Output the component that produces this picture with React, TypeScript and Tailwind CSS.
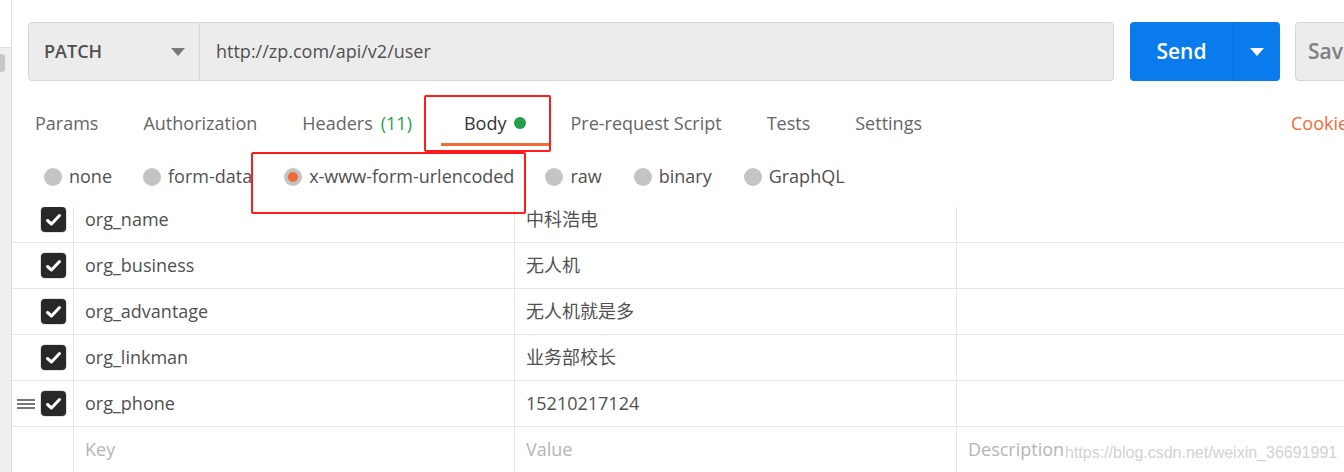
import React from "react";

const font = { fontFamily: '"Open Sans", "Noto Sans CJK SC", sans-serif' };

function Caret({ color }: { color: string }) {
  return (
    <svg width="14" height="8" viewBox="0 0 14 8">
      <polygon points="0,0 14,0 7,8" fill={color} />
    </svg>
  );
}

function Checkbox() {
  return (
    <div className="w-[25px] h-[25px] rounded-[4px] bg-[#282828] ring-1 ring-[#e2e2e2] flex items-center justify-center">
      <svg width="17" height="14" viewBox="0 0 17 14">
        <polyline points="2.5,7.5 6.5,11 14.5,2.5" fill="none" stroke="#ffffff" strokeWidth="3" strokeLinecap="round" strokeLinejoin="round" />
      </svg>
    </div>
  );
}

function Radio({ selected }: { selected?: boolean }) {
  return (
    <div className="w-[18px] h-[18px] rounded-full bg-[#c4c4c4] flex items-center justify-center shrink-0">
      {selected && <div className="w-[10px] h-[10px] rounded-full bg-[#f06a35]" />}
    </div>
  );
}

const rows = [
  { k: "org_name", v: "中科浩电" },
  { k: "org_business", v: "无人机" },
  { k: "org_advantage", v: "无人机就是多" },
  { k: "org_linkman", v: "业务部校长" },
  { k: "org_phone", v: "15210217124", handle: true },
];

export default function App() {
  return (
    <div className="w-[1344px] h-[472px] bg-white relative overflow-hidden flex" style={font}>
      {/* left strip */}
      <div className="w-[12px] shrink-0 border-r border-[#dedede] flex flex-col">
        <div className="h-[48px] border-b border-[#dedede] bg-white" />
        <div className="flex-1 bg-[#efefef] relative">
          <div className="absolute left-0 top-[6px] w-[5px] h-[18px] rounded-r-[3px] bg-[#c6c6c6]" />
        </div>
      </div>

      {/* main */}
      <div className="flex-1 flex flex-col min-w-0">
        {/* top bar */}
        <div className="flex pt-[22px] pl-[16px] shrink-0">
          <div className="flex h-[59px] w-[1086px] shrink-0 bg-[#ececec] border border-[#d6d6d6] rounded-[4px]">
            <div className="w-[171px] shrink-0 flex items-center justify-between pl-[15px] pr-[14px] border-r border-[#d6d6d6]">
              <span className="text-[18px] font-semibold text-[#505050]">PATCH</span>
              <Caret color="#7a7a7a" />
            </div>
            <div className="flex items-center pl-[16px] text-[18px] text-[#505050]">http://zp.com/api/v2/user</div>
          </div>
          <div className="ml-[16px] flex h-[59px] w-[150px] shrink-0 bg-[#097bed] rounded-[4px]">
            <div className="w-[104px] flex items-center justify-center border-r border-[#0a6bd0] text-white text-[21px] font-semibold">Send</div>
            <div className="flex-1 flex items-center justify-center">
              <Caret color="#ffffff" />
            </div>
          </div>
          <div className="ml-[15px] flex h-[59px] w-[110px] shrink-0 bg-[#ececec] border border-[#d6d6d6] rounded-[4px] items-center pl-[12px] text-[21px] font-semibold text-[#808080]">Save</div>
        </div>

        {/* tabs */}
        <div className="flex mt-[19px] h-[46px] shrink-0 text-[18px] text-[#666666]">
          <div className="px-[23px] pt-[3px] border-b-[3px] border-transparent flex items-center">Params</div>
          <div className="px-[22px] pt-[3px] border-b-[3px] border-transparent flex items-center">Authorization</div>
          <div className="px-[23px] pt-[3px] border-b-[3px] border-transparent flex items-center">
            Headers<span className="ml-[8px] text-[#2b9f4f]">(11)</span>
          </div>
          <div className="ml-[6px] px-[23px] pt-[3px] border-b-[3px] border-[#f26b3a] flex items-center text-[#333333]">
            Body<span className="ml-[8px] w-[12px] h-[12px] rounded-full bg-[#249d4d]" />
          </div>
          <div className="pl-[21px] pr-[22px] pt-[3px] border-b-[3px] border-transparent flex items-center">Pre-request Script</div>
          <div className="px-[23px] pt-[3px] border-b-[3px] border-transparent flex items-center">Tests</div>
          <div className="px-[22px] pt-[3px] border-b-[3px] border-transparent flex items-center">Settings</div>
          <div className="flex-1" />
          <div className="pt-[3px] border-b-[3px] border-transparent flex items-center text-[#f26b3a] w-[53px] overflow-hidden whitespace-nowrap">Cookies</div>
        </div>

        {/* radio row */}
        <div className="flex items-center h-[61px] pl-[32px] shrink-0 text-[18px] text-[#505050]">
          <div className="flex items-center gap-[7px]"><Radio /><span>none</span></div>
          <div className="flex items-center gap-[7px] ml-[31px]"><Radio /><span>form-data</span></div>
          <div className="flex items-center gap-[7px] ml-[32px]"><Radio selected /><span>x-www-form-urlencoded</span></div>
          <div className="flex items-center gap-[7px] ml-[31px]"><Radio /><span>raw</span></div>
          <div className="flex items-center gap-[7px] ml-[32px]"><Radio /><span>binary</span></div>
          <div className="flex items-center gap-[7px] ml-[32px]"><Radio /><span>GraphQL</span></div>
        </div>

        {/* table */}
        <div className="flex-1 overflow-hidden">
          <div className="-mt-[10px] text-[18px] text-[#505050]">
            {rows.map((r) => (
              <div key={r.k} className="flex h-[46px] border-b border-[#e6e6e6]">
                <div className="w-[62px] shrink-0 border-r border-[#e6e6e6] flex items-center justify-end pr-[7px] gap-[6px]">
                  {r.handle && (
                    <div className="flex flex-col gap-[2px]">
                      <div className="w-[18px] h-[2px] bg-[#777777]" />
                      <div className="w-[18px] h-[2px] bg-[#777777]" />
                      <div className="w-[18px] h-[2px] bg-[#777777]" />
                    </div>
                  )}
                  <Checkbox />
                </div>
                <div className="w-[441px] shrink-0 border-r border-[#e6e6e6] flex items-center pl-[11px]">{r.k}</div>
                <div className="w-[442px] shrink-0 border-r border-[#e6e6e6] flex items-center pl-[11px]">{r.v}</div>
                <div className="flex-1" />
              </div>
            ))}
            <div className="flex h-[46px] border-b border-[#e6e6e6] text-[#b5b5b5]">
              <div className="w-[62px] shrink-0 border-r border-[#e6e6e6]" />
              <div className="w-[441px] shrink-0 border-r border-[#e6e6e6] flex items-center pl-[11px]">Key</div>
              <div className="w-[442px] shrink-0 border-r border-[#e6e6e6] flex items-center pl-[11px]">Value</div>
              <div className="flex-1 flex items-center pl-[11px]">Description</div>
            </div>
          </div>
        </div>
      </div>

      {/* annotations */}
      <div className="absolute left-[424px] top-[95px] w-[127px] h-[57px] border-2 border-[#ff1c1c] rounded-[2px]" />
      <div className="absolute left-[251px] top-[152px] w-[275px] h-[62px] border-2 border-[#ff1c1c] rounded-[2px]" />

      {/* watermark */}
      <div
        className="absolute left-[1065px] top-[441px] text-[16px] text-[#d2d2d2] whitespace-nowrap"
        style={{ fontFamily: '"Liberation Sans", Arial, sans-serif' }}
      >
        https://blog.csdn.net/weixin_36691991
      </div>
    </div>
  );
}
